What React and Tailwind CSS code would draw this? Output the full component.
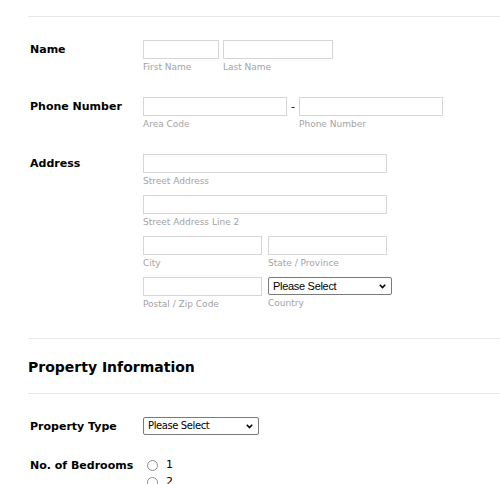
import React from 'react';

const font = { fontFamily: '"DejaVu Sans", Verdana, sans-serif' };

function Field({ label, width }) {
    return (
        <div className="flex flex-col" style={{ width }}>
            <input type="text" className="h-[19px] w-full border border-[#d6d6d6] bg-white outline-none" />
            <span className="mt-[2px] text-[9px] leading-[12px] text-[#a3a3a3]">{label}</span>
        </div>
    );
}

function Select({ width, textClass, label }) {
    return (
        <div className="flex flex-col" style={{ width }}>
            <div className="flex h-[18px] w-full items-center justify-between rounded-[2px] border border-[#7a7a7a] bg-white pl-[4px] pr-[5px]">
                <span className={`${textClass} leading-[16px] text-black`}>Please Select</span>
                <svg width="7" height="5" viewBox="0 0 7 5">
                    <path d="M0.8 0.8 L3.5 3.6 L6.2 0.8" fill="none" stroke="#000" strokeWidth="1.6" />
                </svg>
            </div>
            {label && <span className="mt-[2px] text-[9px] leading-[12px] text-[#a3a3a3]">{label}</span>}
        </div>
    );
}

function Row({ label, children, className = '' }) {
    return (
        <div className={`flex items-start pl-[2px] ${className}`}>
            <div className="w-[113px] text-[11px] font-bold leading-[19px] text-black">{label}</div>
            <div className="flex flex-col">{children}</div>
        </div>
    );
}

export default function App() {
    return (
        <div className="h-[484px] overflow-hidden bg-white pl-[28px] pt-[16px]" style={font}>
            <div className="h-px bg-[#e8e8e8]" />

            <Row label="Name" className="mt-[23px]">
                <div className="flex gap-[4px]">
                    <Field label="First Name" width={76} />
                    <Field label="Last Name" width={110} />
                </div>
            </Row>

            <Row label="Phone Number" className="mt-[24px]">
                <div className="flex items-start">
                    <Field label="Area Code" width={144} />
                    <span className="w-[12px] text-center text-[11px] leading-[19px]">-</span>
                    <Field label="Phone Number" width={144} />
                </div>
            </Row>

            <Row label="Address" className="mt-[24px]">
                <div className="flex flex-col gap-[8px]">
                    <Field label="Street Address" width={244} />
                    <Field label="Street Address Line 2" width={244} />
                    <div className="flex gap-[6px]">
                        <Field label="City" width={119} />
                        <Field label="State / Province" width={119} />
                    </div>
                    <div className="flex items-start gap-[6px]">
                        <Field label="Postal / Zip Code" width={119} />
                        <Select
                            width={124}
                            textClass="font-['Liberation_Sans',Arial,sans-serif] text-[11px] tracking-[-0.3px]"
                            label="Country"
                        />
                    </div>
                </div>
            </Row>

            <div className="mt-[28px] h-px bg-[#e8e8e8]" />

            <h2 className="pb-[16px] pt-[18px] text-[14px] font-bold leading-[20px] text-black">Property Information</h2>

            <div className="h-px bg-[#e8e8e8]" />

            <Row label="Property Type" className="mt-[23px]">
                <Select width={116} textClass="text-[10px] tracking-[-0.4px]" />
            </Row>

            <Row label="No. of Bedrooms" className="mt-[20px]">
                <div className="flex flex-col gap-[3px] pl-[4px] pt-[2px]">
                    {['1', '2', '3'].map((n) => (
                        <label key={n} className="flex items-center gap-[8px] text-[11px] leading-[14px] text-black">
                            <span className="h-[11px] w-[11px] rounded-full border border-[#8a8a8a] bg-white" />
                            {n}
                        </label>
                    ))}
                </div>
            </Row>
        </div>
    );
}
